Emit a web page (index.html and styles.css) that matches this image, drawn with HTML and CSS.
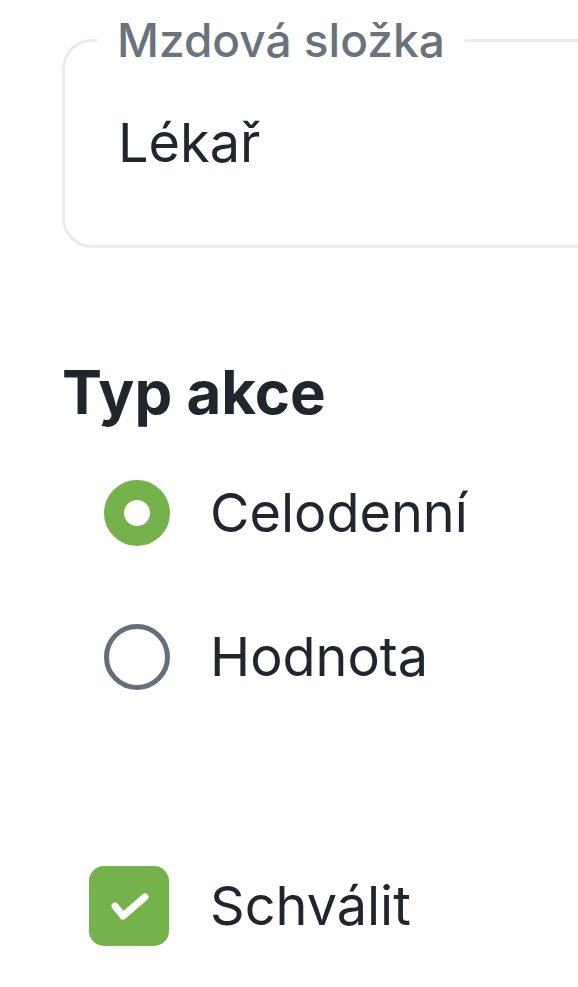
FILE: index.html
```html
<!DOCTYPE html>
<html lang="cs">
<head>
<meta charset="utf-8">
<link rel="stylesheet" href="styles.css">
</head>
<body>
<div class="page">
  <fieldset class="field">
    <legend class="field-label">Mzdová složka</legend>
    <div class="field-value">Lékař</div>
  </fieldset>

  <h2 class="section-title">Typ akce</h2>

  <div class="radio-group">
    <div class="radio-row">
      <span class="radio radio-checked"></span>
      <span class="option-label">Celodenní</span>
    </div>
    <div class="radio-row">
      <span class="radio"></span>
      <span class="option-label">Hodnota</span>
    </div>
  </div>

  <div class="check-row">
    <span class="checkbox">
      <svg viewBox="0 0 80 80" width="80" height="80"><path d="M26 40L34 50L56 31" fill="none" stroke="#fff" stroke-width="7" stroke-linecap="round" stroke-linejoin="round"/></svg>
    </span>
    <span class="option-label">Schválit</span>
  </div>
</div>
</body>
</html>
```

FILE: styles.css
```css
html, body {
  margin: 0;
  padding: 0;
  background: #ffffff;
  overflow: hidden;
}
.page {
  width: 578px;
  height: 987px;
  overflow: hidden;
  font-family: Inter, "Noto Sans", sans-serif;
  color: #1f262e;
}
.field {
  margin: 12px 0 0 62px;
  width: 640px;
  box-sizing: border-box;
  border: 3px solid #e9ebed;
  border-radius: 30px;
  padding: 0 0 0 32px;
  height: 236px;
}
.field-label {
  padding: 0 20px;
  font-size: 46px;
  font-weight: 500;
  color: #68737d;
  line-height: 56px;
}
.field-value {
  padding: 40px 0 0 21px;
  font-size: 54px;
  line-height: 70px;
}
.section-title {
  margin: 104px 0 0 62px;
  font-size: 60px;
  font-weight: 700;
  line-height: 80px;
}
.radio-group {
  margin: 48px 0 0 104px;
  display: flex;
  flex-direction: column;
  gap: 78px;
}
.radio-row, .check-row {
  display: flex;
  align-items: center;
}
.radio {
  width: 66px;
  height: 66px;
  box-sizing: border-box;
  border-radius: 50%;
  border: 5px solid #646f7b;
  flex: none;
}
.radio-checked {
  border: 20px solid #76b24b;
}
.option-label {
  font-size: 54px;
  line-height: 66px;
  margin-left: 40px;
}
.check-row {
  margin: 176px 0 0 89px;
}
.checkbox {
  width: 80px;
  height: 80px;
  border-radius: 15px;
  background: #76b24b;
  display: flex;
  flex: none;
}
.check-row .option-label {
  margin-left: 41px;
}
```
